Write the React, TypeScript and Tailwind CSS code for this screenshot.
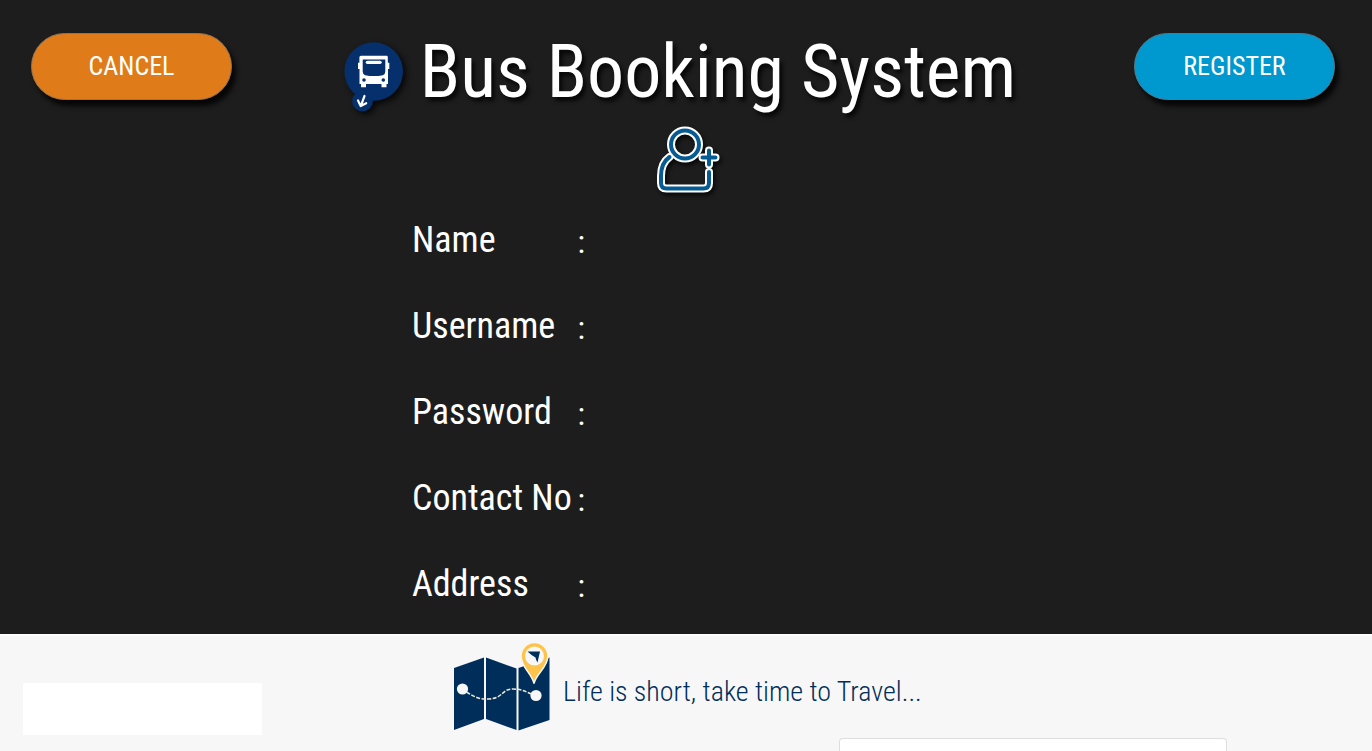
const fields = [
  { id: "name", label: "Name", type: "text" },
  { id: "username", label: "Username", type: "text" },
  { id: "password", label: "Password", type: "password" },
  { id: "contact", label: "Contact No", type: "tel" },
  { id: "address", label: "Address", type: "text" },
];

function BusLogo() {
  return (
    <svg
      viewBox="0 0 60 70"
      className="h-[70px] w-[60px] shrink-0 drop-shadow-[3px_3px_3px_rgba(0,0,0,0.8)]"
      aria-hidden="true"
    >
      <circle cx="29.7" cy="29.5" r="29.3" fill="#05306b" />
      <circle cx="18.5" cy="59" r="10.4" fill="#05306b" />
      <path
        d="M17 13.7h26q.8 0 .8 1.5v5.5h1.500V27h-1.300v15h-1.500v3.200h-5V42H22v3.200h-5V42h-1.500V27H14v-6.300h1.400v-5.500q0-1.500 1.600-1.500Z"
        fill="#fff"
      />
      <path d="M18.700 17.500h22.600v12q0 3-2.500 3.700-8.800 1.800-17.600 0-2.500-.7-2.500-3.700Z" fill="#05306b" />
      <rect x="21.7" y="18.7" width="16" height="3.2" rx="1.6" fill="#fff" />
      <circle cx="20" cy="38" r="1.8" fill="#05306b" />
      <circle cx="39.3" cy="38" r="1.8" fill="#05306b" />
      <path
        d="m20.500 54-3.500 9.500M14 58.500l2.700 5.500 5.500-2.800"
        fill="none"
        stroke="#fff"
        strokeWidth="2.2"
        strokeLinecap="round"
        strokeLinejoin="round"
      />
    </svg>
  );
}

function AddUserIcon() {
  return (
    <svg
      viewBox="0 0 64 68"
      className="h-[68px] w-[64px] drop-shadow-[2px_3px_2px_rgba(0,0,0,0.7)]"
      fill="none"
      strokeLinecap="round"
      strokeLinejoin="round"
      aria-hidden="true"
    >
      <g stroke="#fff" strokeWidth="8">
        <circle cx="29" cy="18.5" r="14" />
        <path d="M13.500 31Q5 37 5 50v7q0 5.500 5.500 5.500h37q5.500 0 5.500-5.500V46" />
        <path d="M53 24.500v14M46.500 31.500h13" />
      </g>
      <g stroke="#075b93" strokeWidth="4">
        <circle cx="29" cy="18.5" r="14" />
        <path d="M13.500 31Q5 37 5 50v7q0 5.500 5.500 5.500h37q5.500 0 5.500-5.500V46" />
        <path d="M53 24.500v14M46.500 31.500h13" />
      </g>
    </svg>
  );
}

function MapIcon() {
  return (
    <svg viewBox="0 0 98 90" className="h-[90px] w-[98px] shrink-0" aria-hidden="true">
      <g fill="#002e5b">
        <path d="M1 26 31 15.500V77L1 88Z" />
        <path d="m33 15.500 30.500 11V88L33 77Z" />
        <path d="m65.500 26 31-10.500V78l-31 10.500Z" />
      </g>
      <path
        d="M9 47c9 6 16 11 27 10 15-1 12-10 24-10 10 0 15 4 23 7"
        fill="none"
        stroke="#eee9d5"
        strokeWidth="1.5"
        strokeDasharray="4 1.5"
      />
      <circle cx="9.5" cy="47" r="5.6" fill="#f7f7f7" />
      <circle cx="83" cy="53.5" r="5.6" fill="#f7f7f7" />
      <path
        d="M81 41.500C79 32 68 25 68 14a13.500 13.500 0 0 1 27 0c0 11-12 18-14 27.500Z"
        fill="#fdc34b"
        stroke="#f7f7f7"
        strokeWidth="1.5"
      />
      <circle cx="81.5" cy="14" r="9.5" fill="#f7f7f7" />
      <path d="M74.500 9.500h12.500L84.500 20.500q-1.500-2-2-5Q78 13 74.500 9.500Z" fill="#002e5b" />
    </svg>
  );
}

export default function App() {
  return (
    <div className="flex min-h-screen flex-col bg-[#f7f7f7] font-['Roboto_Condensed','Liberation_Sans_Narrow',sans-serif]">
      <form
        className="border-b-2 border-white bg-[#1d1d1e] pb-[7px] text-white"
        onSubmit={(event) => event.preventDefault()}
      >
        <header className="flex items-start justify-between pt-[33px] pr-[37px] pl-[31px]">
          <button
            type="button"
            className="h-[67px] w-[201px] rounded-full border border-[#96744f] bg-[#e07b1a] text-[26px] shadow-[4px_6px_5px_rgba(0,0,0,0.8)]"
          >
            CANCEL
          </button>
          <div className="flex items-start gap-4 pt-[2px] pr-[6px]">
            <div className="pt-[7px]">
              <BusLogo />
            </div>
            <h1 className="text-[74px] leading-[74px] whitespace-nowrap [text-shadow:3px_4px_4px_rgba(0,0,0,0.8)]">
              Bus Booking System
            </h1>
          </div>
          <button
            type="submit"
            className="h-[67px] w-[201px] rounded-full border border-[#55798a] bg-[#0099cf] text-[26px] shadow-[4px_6px_5px_rgba(0,0,0,0.8)]"
          >
            REGISTER
          </button>
        </header>
        <div className="flex justify-center pt-[14px] pl-1">
          <AddUserIcon />
        </div>
        <div className="mx-auto flex max-w-[548px] flex-col pt-[3px]">
          {fields.map((field) => (
            <div key={field.id} className="flex h-[86px] items-center">
              <label
                htmlFor={field.id}
                className="flex w-[173px] items-center justify-between text-[36px] whitespace-nowrap"
              >
                {field.label}
                <span className="pt-1 text-[32px]">:</span>
              </label>
              <input
                id={field.id}
                type={field.type}
                className="h-12 min-w-0 flex-1 bg-transparent px-3 text-2xl outline-none"
              />
            </div>
          ))}
        </div>
      </form>
      <footer>
        <div className="flex h-[102px] items-start pl-[23px]">
          <div className="mt-[47px] h-[52px] w-[239px] bg-white" />
          <div className="ml-[191px] flex items-center gap-3 pt-[6px] text-[#002e5b]">
            <MapIcon />
            <p className="pt-[10px] text-[28px] font-light whitespace-nowrap">Life is short, take time to Travel...</p>
          </div>
        </div>
        <div className="mr-[145px] ml-auto h-[13px] w-[388px] rounded-t border border-b-0 border-[#dedede] bg-white" />
      </footer>
    </div>
  );
}
